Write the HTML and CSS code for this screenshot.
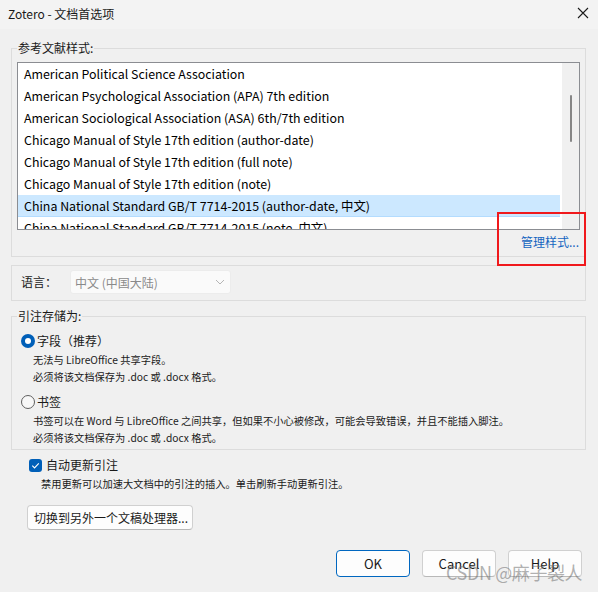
FILE: index.html
```html
<!DOCTYPE html>
<html lang="zh-CN">
<head>
<meta charset="utf-8">
<title>Zotero - 文档首选项</title>
<link rel="stylesheet" href="styles.css">
</head>
<body>
<div class="window">
  <div class="titlebar">
    <span class="title">Zotero - 文档首选项</span>
    <svg class="close" width="12" height="12" viewBox="0 0 12 12"><path d="M1 1L11 11M11 1L1 11" stroke="#1b1b1b" stroke-width="1.1" fill="none"/></svg>
  </div>
  <div class="content">
    <div class="group group-styles">
      <span class="legend">参考文献样式:</span>
      <div class="listbox">
        <div class="rows">
          <div class="row">American Political Science Association</div>
          <div class="row">American Psychological Association (APA) 7th edition</div>
          <div class="row">American Sociological Association (ASA) 6th/7th edition</div>
          <div class="row">Chicago Manual of Style 17th edition (author-date)</div>
          <div class="row">Chicago Manual of Style 17th edition (full note)</div>
          <div class="row">Chicago Manual of Style 17th edition (note)</div>
          <div class="row selected">China National Standard GB/T 7714-2015 (author-date, 中文)</div>
          <div class="row">China National Standard GB/T 7714-2015 (note, 中文)</div>
        </div>
        <div class="scrollbar"><div class="thumb"></div></div>
      </div>
      <div class="manage"><span class="link">管理样式...</span></div>
    </div>

    <div class="group group-lang">
      <span class="lang-label">语言：</span>
      <div class="select">
        <span>中文 (中国大陆)</span>
        <svg class="chev" width="10" height="6" viewBox="0 0 10 6"><path d="M1 1L5 5L9 1" stroke="#b5b5b5" stroke-width="1" fill="none"/></svg>
      </div>
    </div>

    <div class="group group-store">
      <span class="legend">引注存储为:</span>
      <div class="option">
        <span class="radio checked"></span>
        <span class="opt-label">字段（推荐）</span>
      </div>
      <div class="desc">
        <div>无法与 LibreOffice 共享字段。</div>
        <div>必须将该文档保存为 .doc 或 .docx 格式。</div>
      </div>
      <div class="option option-2">
        <span class="radio"></span>
        <span class="opt-label">书签</span>
      </div>
      <div class="desc desc-2">
        <div>书签可以在 Word 与 LibreOffice 之间共享，但如果不小心被修改，可能会导致错误，并且不能插入脚注。</div>
        <div>必须将该文档保存为 .doc 或 .docx 格式。</div>
      </div>
    </div>

    <div class="check-row">
      <span class="checkbox"><svg width="13" height="13" viewBox="0 0 13 13"><path d="M3.3 6.7L5.5 8.9L9.8 4.4" stroke="#fff" stroke-width="1.1" fill="none"/></svg></span>
      <span class="check-label">自动更新引注</span>
    </div>
    <div class="check-desc">禁用更新可以加速大文档中的引注的插入。单击刷新手动更新引注。</div>

    <button class="btn btn-switch">切换到另外一个文稿处理器...</button>

    <div class="actions">
      <button class="btn btn-dlg btn-default">OK</button>
      <button class="btn btn-dlg">Cancel</button>
      <button class="btn btn-dlg">Help</button>
    </div>
  </div>

  <div class="highlight-box"></div>
  <div class="watermark">CSDN @麻子裂人</div>
</div>
</body>
</html>
```

FILE: styles.css
```css
* { box-sizing: border-box; }

html, body {
  margin: 0;
  padding: 0;
  background: #f0f0f0;
}

body {
  font-family: "Noto Sans CJK SC", "Noto Sans", sans-serif;
  font-size: 12px;
  color: #000;
}

.window {
  position: relative;
  width: 598px;
  height: 592px;
  overflow: hidden;
  background: #f0f0f0;
}

.titlebar {
  height: 29px;
  background: #f3f3f3;
  display: flex;
  align-items: center;
  justify-content: space-between;
  padding: 0 9px 0 8px;
}

.title {
  font-size: 12px;
  line-height: 16px;
  color: #1a1a1a;
  margin-top: -2px;
}

.close {
  display: block;
  margin-top: -3px;
}

.content {
  padding: 19px 12px 0 11px;
}

.group {
  position: relative;
  border: 1px solid #dcdcdc;
}

.legend {
  position: absolute;
  top: -9px;
  left: 5px;
  padding: 0 1px;
  background: #f0f0f0;
  font-size: 12px;
  line-height: 16px;
  color: #1a1a1a;
}

/* styles list */
.group-styles {
  padding: 13px 5px 2px 5px;
}

.listbox {
  display: flex;
  height: 168px;
  border: 1px solid #8b8d92;
  background: #fff;
}

.rows {
  flex: 1;
  overflow: hidden;
  margin-right: 2px;
}

.row {
  height: 22px;
  line-height: 22px;
  padding-left: 6px;
  font-size: 12.4px;
  white-space: nowrap;
  color: #000;
}

.row.selected {
  background: #cce8ff;
  box-shadow: inset 0 -1px 0 #b3dcff;
}

.scrollbar {
  width: 17px;
  background: #f0f0f0;
  position: relative;
}

.thumb {
  position: absolute;
  left: 8px;
  top: 32px;
  width: 2px;
  height: 47px;
  border-radius: 1px;
  background: #868686;
}

.manage {
  display: flex;
  justify-content: flex-end;
  height: 24px;
  align-items: center;
  padding-right: 1px;
}

.link {
  color: #1565c0;
  font-size: 12px;
  line-height: 16px;
}

/* language */
.group-lang {
  margin-top: 8px;
  display: flex;
  align-items: center;
  padding: 4px 9px 6px 9px;
}

.lang-label {
  width: 49px;
  font-size: 12px;
  line-height: 16px;
  color: #1a1a1a;
}

.select {
  width: 161px;
  height: 24px;
  display: flex;
  align-items: center;
  justify-content: space-between;
  padding: 0 5px 0 4px;
  background: #fafafa;
  border: 1px solid #ececec;
  border-radius: 3px;
  color: #8a8a8a;
  font-size: 12px;
}

.chev { display: block; }

/* storage */
.group-store {
  margin-top: 15px;
  padding: 15px 9px 3px 9px;
}

.option {
  display: flex;
  align-items: center;
  height: 18px;
}

.option-2 { margin-top: 8px; }

.radio {
  width: 14px;
  height: 14px;
  border-radius: 50%;
  border: 1px solid #5f5f5f;
  background: #f7f7f7;
  margin-right: 2px;
  flex: none;
}

.radio.checked {
  border: none;
  background: #005fb8;
  position: relative;
}

.radio.checked::after {
  content: "";
  position: absolute;
  left: 4px;
  top: 4px;
  width: 6px;
  height: 6px;
  border-radius: 50%;
  background: #fff;
}

.opt-label {
  font-size: 12px;
  line-height: 16px;
  color: #1a1a1a;
}

.desc {
  padding-left: 12px;
  margin-top: 1px;
  font-size: 10.25px;
  line-height: 17px;
  color: #1a1a1a;
  white-space: nowrap;
}

.desc-2 { margin-top: 2px; line-height: 16.5px; }

/* checkbox */
.check-row {
  display: flex;
  align-items: center;
  height: 18px;
  margin-top: 6px;
  padding-left: 18px;
}

.checkbox {
  width: 13px;
  height: 13px;
  border-radius: 3px;
  background: #005fb8;
  margin-right: 4px;
  flex: none;
  display: block;
}

.checkbox svg { display: block; }

.check-label {
  font-size: 12px;
  line-height: 16px;
  color: #1a1a1a;
}

.check-desc {
  padding-left: 30px;
  margin-top: 1px;
  font-size: 10.25px;
  line-height: 17px;
  color: #1a1a1a;
  white-space: nowrap;
}

/* buttons */
.btn {
  font-family: "Noto Sans CJK SC", "Noto Sans", sans-serif;
  font-size: 12px;
  color: #1a1a1a;
  background: #fdfdfd;
  border: 1px solid #d0d0d0;
  border-bottom-color: #b8b8b8;
  border-radius: 4px;
  padding: 0;
}

.btn-switch {
  display: block;
  margin: 13px 0 0 16px;
  width: 166px;
  height: 25px;
  text-align: left;
  padding-left: 6px;
}

.actions {
  display: flex;
  justify-content: flex-end;
  gap: 12px;
  margin-top: 20px;
  padding-right: 4px;
}

.btn-dlg {
  width: 74px;
  height: 27px;
  font-size: 13px;
}

.btn-default {
  border: 1px solid #0067c0;
}

/* overlays */
.highlight-box {
  position: absolute;
  left: 497px;
  top: 212px;
  width: 89px;
  height: 54px;
  border: 2px solid #f0191c;
}

.watermark {
  position: absolute;
  left: 446px;
  top: 561px;
  font-size: 18px;
  letter-spacing: -0.4px;
  line-height: 22px;
  color: rgba(110, 110, 110, 0.55);
  white-space: nowrap;
}
```
